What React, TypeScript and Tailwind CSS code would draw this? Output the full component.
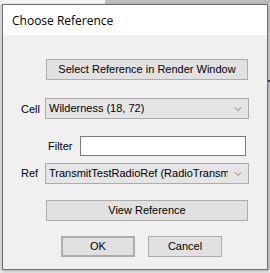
import { ChevronDown } from "lucide-react";

const ui = { fontFamily: '"Liberation Sans", Arial, sans-serif' };
const title = { fontFamily: '"Open Sans", "Noto Sans", sans-serif' };

function Button({ label, className = "" }: { label: string; className?: string }) {
  return (
    <div
      className={`flex h-[21px] items-center justify-center border border-[#adadad] bg-[#e1e1e1] text-[11px] text-black ${className}`}
    >
      {label}
    </div>
  );
}

function Combo({ value }: { value: string }) {
  return (
    <div className="flex h-[21px] w-[204px] items-center border border-[#acacac] bg-[#e5e5e5] pl-[3px] pr-[4px] text-[11px] text-black">
      <span className="flex-1 overflow-hidden whitespace-nowrap">{value}</span>
      <ChevronDown size={12} strokeWidth={1.5} className="ml-1 text-[#606060]" />
    </div>
  );
}

export default function App() {
  return (
    <div className="relative h-[273px] w-[270px] overflow-hidden bg-[#d9d9d9]" style={ui}>
      {/* the window behind the dialog */}
      <div className="absolute left-0 top-0 h-[4px] w-[105px] bg-[#f4f4f4]" />
      <div className="absolute left-[105px] top-0 h-[4px] w-[165px] bg-[#bdbdbd]" />
      <div className="absolute left-0 top-[270px] h-[3px] w-[270px] bg-[#e6e6e6]" />
      <div className="absolute left-[268px] top-[80px] h-[2px] w-[2px] bg-[#6a2a6a]" />

      <div className="absolute left-[2px] top-[4px] flex h-[266px] w-[266px] flex-col border border-[#6e6e6e] bg-[#f0f0f0] shadow-[1px_1px_3px_rgba(0,0,0,0.25)]">
        <div className="flex h-[30px] items-center bg-white pl-[9px] pt-[1px] text-[12px] text-black" style={title}>
          Choose Reference
        </div>

        <div className="flex flex-col">
          <Button label="Select Reference in Render Window" className="ml-[43px] mt-[24px] w-[202px]" />

          <div className="mt-[18px] flex items-start">
            <span className="ml-[18px] mt-[3px] w-[24px] text-[11px]">Cell</span>
            <Combo value="Wilderness (18, 72)" />
          </div>

          <div className="mt-[17px] flex items-center">
            <span className="ml-[45px] w-[32px] text-[11px]">Filter</span>
            <div className="h-[20px] w-[166px] border border-[#7a7a7a] bg-white" />
          </div>

          <div className="mt-[7px] flex items-center">
            <span className="ml-[18px] w-[24px] text-[11px]">Ref</span>
            <Combo value="TransmitTestRadioRef (RadioTransmitter)" />
          </div>

          <Button label="View Reference" className="ml-[43px] mt-[16px] w-[202px]" />

          <div className="mt-[15px] flex">
            <Button label="OK" className="ml-[58px] w-[74px] border-2 border-[#0078d7]" />
            <Button label="Cancel" className="ml-[13px] w-[74px]" />
          </div>
        </div>
      </div>
    </div>
  );
}
